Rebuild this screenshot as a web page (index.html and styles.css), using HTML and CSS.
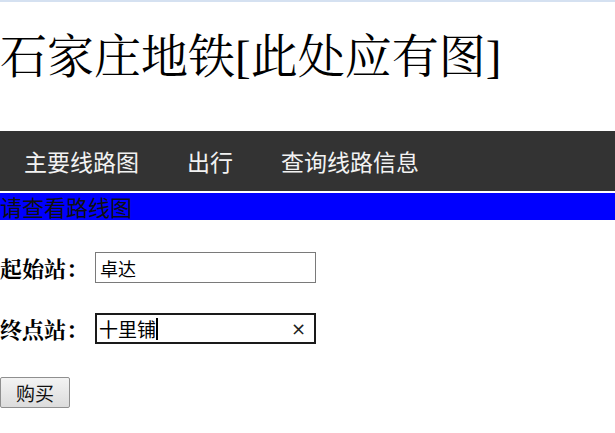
FILE: index.html
```html
<!DOCTYPE html>
<html lang="zh-CN">
<head>
<meta charset="utf-8">
<title>石家庄地铁</title>
<link rel="stylesheet" href="styles.css">
</head>
<body>
<div class="topline"></div>
<h1 class="title">石家庄地铁[此处应有图]</h1>
<nav class="nav">
  <a class="nav-item" href="#">主要线路图</a>
  <a class="nav-item" href="#">出行</a>
  <a class="nav-item" href="#">查询线路信息</a>
</nav>
<div class="notice">请查看路线图</div>
<form class="form">
  <div class="row">
    <label class="label" for="start">起始站：</label>
    <input class="input" id="start" type="text" value="卓达">
  </div>
  <div class="row">
    <label class="label">终点站：</label>
    <div class="field focus"><span class="val">十里铺</span><span class="caret"></span><span class="clear">×</span></div>
  </div>
  <div class="row btn-row">
    <button class="btn" type="button">购买</button>
  </div>
</form>
</body>
</html>
```
FILE: styles.css
```css
html, body {
  margin: 0;
  padding: 0;
  background: #fff;
}
body {
  font-family: "Liberation Serif", "Noto Serif CJK SC", "Noto Sans CJK SC", serif;
  color: #000;
}
.topline {
  height: 2px;
  background: #d5e1f1;
}
.title {
  margin: 27px 0 46px;
  font-size: 47px;
  line-height: 56px;
  font-weight: normal;
  font-family: "Liberation Serif", "Noto Serif CJK SC", "Noto Sans CJK SC", serif;
}
.nav {
  display: flex;
  height: 60px;
  align-items: center;
  background: #333;
}
.nav-item {
  padding: 0 24px;
  font-family: "Noto Sans CJK SC", sans-serif;
  font-size: 23px;
  line-height: 60px;
  color: #f2f2f2;
  text-decoration: none;
}
.notice {
  margin-top: 2px;
  height: 27px;
  background: #0000ff;
  font-family: "Noto Sans CJK SC", sans-serif;
  font-size: 22px;
  line-height: 27px;
  color: #101010;
  white-space: nowrap;
}
.form {
  display: flex;
  flex-direction: column;
  gap: 30px;
  padding-top: 32px;
}
.row {
  display: flex;
  align-items: center;
  gap: 7px;
  height: 31px;
}
.label {
  font-size: 22px;
  font-weight: bold;
  font-family: "Noto Serif CJK SC", "Liberation Serif", "Noto Sans CJK SC", serif;
}
.input, .field {
  box-sizing: border-box;
  width: 221px;
  height: 31px;
  margin: 0;
  padding: 0 4px;
  font-family: "Noto Sans CJK SC", sans-serif;
  font-size: 18px;
  color: #000;
  background: #fff;
  outline: none;
}
.input {
  border: 1px solid #7a7a7a;
}
.field {
  display: flex;
  align-items: center;
  border: 2px solid #1a1a1a;
  padding: 0 3px 0 2px;
}
.val {
  font-size: 19px;
}
.caret {
  width: 2px;
  height: 22px;
  background: #000;
}
.clear {
  margin-left: auto;
  margin-right: 5px;
  font-family: "DejaVu Sans", sans-serif;
  font-size: 18px;
  line-height: 1;
  color: #222;
}
.btn-row {
  margin-top: 3px;
}
.btn {
  box-sizing: border-box;
  width: 70px;
  height: 31px;
  margin: 0;
  padding: 0;
  border: 1px solid #8f8f8f;
  border-radius: 2px;
  background: linear-gradient(#f3f3f3, #dcdcdc);
  font-family: "Noto Sans CJK SC", sans-serif;
  font-size: 19px;
  color: #111;
}
```
